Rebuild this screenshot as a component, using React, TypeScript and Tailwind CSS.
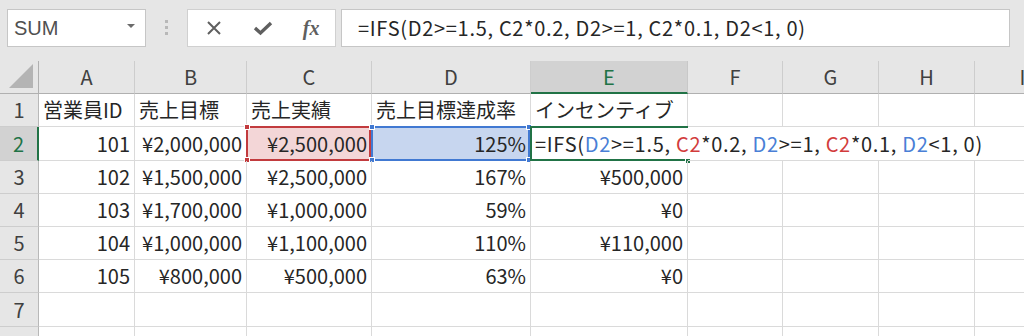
import React from "react";

const FONT = "font-['Noto_Sans_CJK_JP',sans-serif]";

type Cell = { text?: string; align?: "left" | "right" };

const COLS = ["A", "B", "C", "D", "E", "F", "G", "H", "I"];

const ROWS: Cell[][] = [
  [
    { text: "営業員ID", align: "left" },
    { text: "売上目標", align: "left" },
    { text: "売上実績", align: "left" },
    { text: "売上目標達成率", align: "left" },
    { text: "インセンティブ", align: "left" },
  ],
  [
    { text: "101", align: "right" },
    { text: "¥2,000,000", align: "right" },
    { text: "¥2,500,000", align: "right" },
    { text: "125%", align: "right" },
    {},
  ],
  [
    { text: "102", align: "right" },
    { text: "¥1,500,000", align: "right" },
    { text: "¥2,500,000", align: "right" },
    { text: "167%", align: "right" },
    { text: "¥500,000", align: "right" },
  ],
  [
    { text: "103", align: "right" },
    { text: "¥1,700,000", align: "right" },
    { text: "¥1,000,000", align: "right" },
    { text: "59%", align: "right" },
    { text: "¥0", align: "right" },
  ],
  [
    { text: "104", align: "right" },
    { text: "¥1,000,000", align: "right" },
    { text: "¥1,100,000", align: "right" },
    { text: "110%", align: "right" },
    { text: "¥110,000", align: "right" },
  ],
  [
    { text: "105", align: "right" },
    { text: "¥800,000", align: "right" },
    { text: "¥500,000", align: "right" },
    { text: "63%", align: "right" },
    { text: "¥0", align: "right" },
  ],
  [],
  [],
];

function Formula() {
  const blue = "text-[#4a7fd6]";
  const red = "text-[#d23c3c]";
  return (
    <span className="whitespace-pre tracking-[0.7px]">
      =IFS(<span className={blue}>D2</span>&gt;=1.5, <span className={red}>C2</span>*0.2,{" "}
      <span className={blue}>D2</span>&gt;=1, <span className={red}>C2</span>*0.1,{" "}
      <span className={blue}>D2</span>&lt;1, 0)
    </span>
  );
}

function Handle({ color, pos }: { color: string; pos: string }) {
  return <div className={`absolute h-[6px] w-[6px] border border-white ${color} ${pos}`} />;
}

function Toolbar() {
  return (
    <div className="flex h-[61px] items-start bg-[#e6e6e6] pt-[9px]">
      {/* name box */}
      <div className="ml-[7px] flex h-[38px] w-[139px] items-center justify-between border border-[#c6c6c6] bg-white pl-[6px] pr-[10px]">
        <span className="font-['Liberation_Sans',sans-serif] text-[20px] text-[#505050]">SUM</span>
        <span className="mb-[4px] h-0 w-0 border-x-[4px] border-t-[4px] border-x-transparent border-t-[#6b6b6b]" />
      </div>
      {/* grip */}
      <div className="ml-[19px] mt-[11px] flex flex-col gap-[3px]">
        <span className="h-[3px] w-[3px] bg-[#b8b8b8]" />
        <span className="h-[3px] w-[3px] bg-[#b8b8b8]" />
        <span className="h-[3px] w-[3px] bg-[#b8b8b8]" />
      </div>
      {/* buttons */}
      <div className="ml-[19px] flex h-[38px] w-[149px] items-center border border-[#d0d0d0] bg-white">
        <div className="flex w-[50px] justify-center pl-[2px]">
          <svg width="16" height="16" viewBox="0 0 16 16">
            <path d="M2 2 L14 14 M14 2 L2 14" stroke="#5f5f5f" strokeWidth="2" />
          </svg>
        </div>
        <div className="flex w-[50px] justify-center">
          <svg width="20" height="16" viewBox="0 0 20 16">
            <path d="M2 8 L7.5 13 L18 3" stroke="#5f5f5f" strokeWidth="3.4" fill="none" />
          </svg>
        </div>
        <div className="flex w-[48px] justify-center">
          <span className="font-['Liberation_Serif',serif] text-[20px] font-bold italic text-[#5f5f5f]">fx</span>
        </div>
      </div>
      {/* formula box */}
      <div className={`ml-[5px] flex h-[38px] w-[669px] items-center border border-[#c6c6c6] bg-white pl-[16px] ${FONT} text-[20px] text-[#262626]`}>
        <span className="whitespace-pre tracking-[0.7px]">=IFS(D2&gt;=1.5, C2*0.2, D2&gt;=1, C2*0.1, D2&lt;1, 0)</span>
      </div>
    </div>
  );
}

export default function App() {
  return (
    <div className="h-[336px] w-[1024px] overflow-hidden bg-white">
      <Toolbar />
      <div
        className={`grid grid-cols-[39px_96px_112px_125px_159px_157px_95px_96px_96px_96px] grid-rows-[33px_33px_34px_33px_33px_33px_33px_34px_33px] ${FONT} text-[20px] text-[#262626]`}
      >
        {/* corner */}
        <div className="relative border-b border-r border-[#b0b0b0] bg-[#e6e6e6]">
          <svg className="absolute bottom-[5px] right-[5px]" width="24" height="24" viewBox="0 0 24 24">
            <path d="M24 0 L24 24 L0 24 Z" fill="#b4b4b4" />
          </svg>
        </div>
        {COLS.map((c) =>
          c === "E" ? (
            <div
              key={c}
              className="flex items-center justify-center border-b-2 border-r border-b-[#217346] border-r-[#c8c8c8] bg-[#d2d2d2] text-[#217346]"
            >
              {c}
            </div>
          ) : (
            <div
              key={c}
              className="flex items-center justify-center border-b border-r border-b-[#b0b0b0] border-r-[#cdcdcd] bg-[#e6e6e6] text-[#404040]"
            >
              {c}
            </div>
          )
        )}

        {ROWS.map((row, ri) => {
          const rn = ri + 1;
          return (
            <React.Fragment key={rn}>
              {rn === 2 ? (
                <div className="flex items-center justify-center border-b border-r-2 border-b-[#cdcdcd] border-r-[#217346] bg-[#d2d2d2] text-[#217346]">
                  {rn}
                </div>
              ) : (
                <div className="flex items-center justify-center border-b border-r border-b-[#cdcdcd] border-r-[#b8b8b8] bg-[#e6e6e6] text-[#404040]">
                  {rn}
                </div>
              )}
              {COLS.map((c, ci) => {
                const cell = row[ci] || {};
                const isC2 = rn === 2 && c === "C";
                const isD2 = rn === 2 && c === "D";
                const isE2 = rn === 2 && c === "E";
                const bg = isC2 ? "bg-[#f3d6d7]" : isD2 ? "bg-[#c7d6ef]" : "";
                const hideRight = rn === 2 && (c === "E" || c === "F" || c === "G" || c === "H");
                return (
                  <div
                    key={c}
                    className={`relative flex items-center whitespace-nowrap border-b border-[#dadada] px-[4px] ${
                      hideRight ? "" : "border-r"
                    } ${cell.align === "right" ? "justify-end" : "justify-start"} ${bg}`}
                  >
                    {cell.text}
                    {isC2 && (
                      <div className="absolute -left-[1px] -top-[1px] bottom-[-1px] right-0 border-2 border-[#c23b3e]">
                        <Handle color="bg-[#c23b3e]" pos="-left-[4px] -top-[4px]" />
                        <Handle color="bg-[#c23b3e]" pos="-left-[4px] -bottom-[4px]" />
                      </div>
                    )}
                    {isD2 && (
                      <div className="absolute -left-[1px] -top-[1px] bottom-[-1px] right-0 border-2 border-[#4179d2]">
                        <Handle color="bg-[#4179d2]" pos="-left-[4px] -top-[4px]" />
                        <Handle color="bg-[#4179d2]" pos="-left-[4px] -bottom-[4px]" />
                        <Handle color="bg-[#4179d2]" pos="-right-[4px] -top-[4px]" />
                        <Handle color="bg-[#4179d2]" pos="-right-[4px] -bottom-[4px]" />
                      </div>
                    )}
                    {isE2 && (
                      <>
                        <div className="absolute -left-[1px] -top-[1px] bottom-[-1px] right-0 border-y-2 border-l-2 border-[#217346]" />
                        <div className="absolute -bottom-[4px] -right-[3px] h-[6px] w-[6px] border border-white bg-[#217346]" />
                        <div className="absolute left-[1px] top-[1px] z-10 flex h-[31px] items-center bg-white pl-[3px] pr-[6px]">
                          <Formula />
                        </div>
                      </>
                    )}
                  </div>
                );
              })}
            </React.Fragment>
          );
        })}
      </div>
    </div>
  );
}
